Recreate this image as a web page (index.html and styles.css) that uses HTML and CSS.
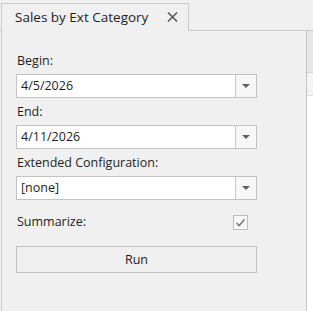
FILE: index.html
```html
<!DOCTYPE html>
<html lang="en">
<head>
    <meta charset="UTF-8">
    <title>Sales by Ext Category</title>
    <link rel="stylesheet" href="styles.css">
</head>
<body>
    <div class="tabstrip">
        <div class="tab">
            <span class="tab-title">Sales by Ext Category</span>
            <svg class="tab-close" width="11" height="10" viewBox="0 0 11 10">
                <path d="M1 0.5 L10 9.5 M10 0.5 L1 9.5" stroke="#5c5c5c" stroke-width="1.6" fill="none"/>
            </svg>
        </div>
    </div>

    <div class="workspace">
        <div class="panel">
            <div class="field-label">Begin:</div>
            <div class="combo">
                <span class="combo-value">4/5/2026</span>
                <span class="combo-btn"><span class="arrow"></span></span>
            </div>

            <div class="field-label">End:</div>
            <div class="combo">
                <span class="combo-value">4/11/2026</span>
                <span class="combo-btn"><span class="arrow"></span></span>
            </div>

            <div class="field-label">Extended Configuration:</div>
            <div class="combo">
                <span class="combo-value">[none]</span>
                <span class="combo-btn"><span class="arrow"></span></span>
            </div>

            <div class="check-row">
                <span>Summarize:</span>
                <span class="checkbox">
                    <svg width="13" height="13" viewBox="0 0 13 13">
                        <path d="M2.5 7 L5.2 9.6 L10.6 3.2" stroke="#7a7a7a" stroke-width="1.5" fill="none"/>
                    </svg>
                </span>
            </div>

            <button class="run-btn">Run</button>
        </div>

        <div class="side-panel">
            <div class="side-head"></div>
            <div class="side-row"></div>
            <div class="side-body"></div>
        </div>
    </div>
</body>
</html>
```

FILE: styles.css
```css
    body {
        margin: 0;
        background: #f0f0f0;
        font-family: 'Open Sans', 'Noto Sans', sans-serif;
        font-size: 12.5px;
        color: #1e1e1e;
        height: 311px;
        overflow: hidden;
    }

    /* Document tab strip */
    .tabstrip {
        height: 30px;
        border-bottom: 1px solid #cacaca;
        display: flex;
        align-items: flex-end;
    }

    .tab {
        box-sizing: border-box;
        width: 188px;
        height: 28px;
        margin-left: 1px;
        margin-bottom: -1px;
        border: 1px solid #cacaca;
        border-bottom: none;
        background: #f0f0f0;
        display: flex;
        align-items: center;
        padding: 0 0 2px 13px;
    }

    .tab-title {
        white-space: nowrap;
        font-size: 13.5px;
    }

    .tab-close {
        margin-left: 19px;
    }

    .workspace {
        display: flex;
        height: 280px;
    }

    /* Parameters panel */
    .panel {
        box-sizing: border-box;
        width: 306px;
        margin-left: 1px;
        border-left: 1px solid #cacaca;
        border-right: 1px solid #c4c4c4;
        padding: 21px 0 0 14px;
        display: flex;
        flex-direction: column;
    }

    .field-label {
        height: 18px;
        line-height: 18px;
        margin-bottom: 4px;
        padding-left: 1px;
    }

    .combo {
        box-sizing: border-box;
        width: 241px;
        height: 24px;
        border: 1px solid #c2c2c2;
        background: #fff;
        display: flex;
        margin-bottom: 5px;
    }

    .combo-value {
        flex: 1;
        line-height: 22px;
        padding-left: 4px;
    }

    .combo-btn {
        width: 20px;
        border-left: 1px solid #c8c8c8;
        background: #f7f7f7;
        display: flex;
        align-items: center;
        justify-content: center;
    }

    .arrow {
        width: 0;
        height: 0;
        border-left: 4px solid transparent;
        border-right: 4px solid transparent;
        border-top: 4px solid #606060;
    }

    .check-row {
        width: 241px;
        height: 18px;
        line-height: 18px;
        margin-top: 8px;
        padding-left: 1px;
        box-sizing: border-box;
        display: flex;
        align-items: center;
        justify-content: space-between;
    }

    .checkbox {
        box-sizing: border-box;
        width: 15px;
        height: 15px;
        margin-right: 9px;
        border: 1px solid #bdbdbd;
        background: #f7f7f7;
        display: flex;
        align-items: center;
        justify-content: center;
    }

    .run-btn {
        box-sizing: border-box;
        width: 241px;
        height: 27px;
        margin-top: 15px;
        border: 1px solid #c2c2c2;
        background: #efefef;
        font-family: inherit;
        font-size: 12.5px;
        color: #1e1e1e;
        padding: 0;
    }

    /* Neighbouring panel, mostly cut off */
    .side-panel {
        flex: 1;
        display: flex;
        flex-direction: column;
    }

    .side-head {
        height: 41px;
        background: #e6e6e6;
        border-bottom: 1px solid #d4d4d4;
    }

    .side-row {
        height: 22px;
        background: #f4f4f4;
        border-bottom: 1px solid #dcdcdc;
    }

    .side-body {
        flex: 1;
        background: #fff;
    }
```
